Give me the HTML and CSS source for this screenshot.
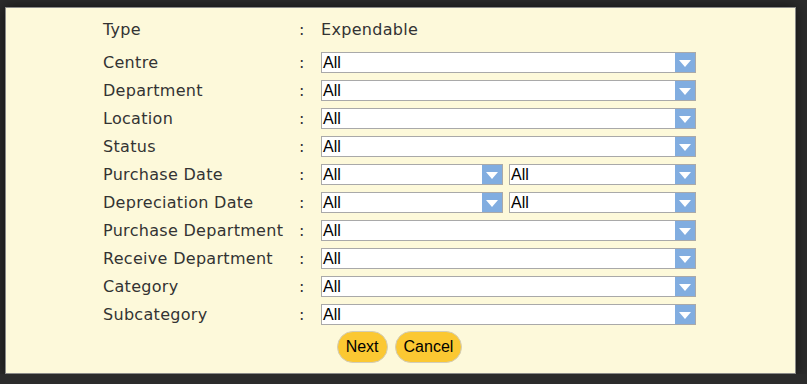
FILE: index.html
```html
<!DOCTYPE html>
<html lang="en">
<head>
  <meta charset="UTF-8">
  <title>Report Filter</title>
  <link rel="stylesheet" href="styles.css">
</head>
<body>
  <div class="panel">
    <div class="form">
      <div class="label top">Type</div><div class="colon top">:</div><div class="value top">Expendable</div>

      <div class="label">Centre</div><div class="colon">:</div>
      <div class="select"><span>All</span><i class="arrow"></i></div>

      <div class="label">Department</div><div class="colon">:</div>
      <div class="select"><span>All</span><i class="arrow"></i></div>

      <div class="label">Location</div><div class="colon">:</div>
      <div class="select"><span>All</span><i class="arrow"></i></div>

      <div class="label">Status</div><div class="colon">:</div>
      <div class="select"><span>All</span><i class="arrow"></i></div>

      <div class="label">Purchase Date</div><div class="colon">:</div>
      <div class="pair">
        <div class="select"><span>All</span><i class="arrow"></i></div>
        <div class="select"><span>All</span><i class="arrow"></i></div>
      </div>

      <div class="label">Depreciation Date</div><div class="colon">:</div>
      <div class="pair">
        <div class="select"><span>All</span><i class="arrow"></i></div>
        <div class="select"><span>All</span><i class="arrow"></i></div>
      </div>

      <div class="label">Purchase Department</div><div class="colon">:</div>
      <div class="select"><span>All</span><i class="arrow"></i></div>

      <div class="label">Receive Department</div><div class="colon">:</div>
      <div class="select"><span>All</span><i class="arrow"></i></div>

      <div class="label">Category</div><div class="colon">:</div>
      <div class="select"><span>All</span><i class="arrow"></i></div>

      <div class="label">Subcategory</div><div class="colon">:</div>
      <div class="select"><span>All</span><i class="arrow"></i></div>
    </div>

    <div class="buttons">
      <button class="btn">Next</button>
      <button class="btn">Cancel</button>
    </div>
  </div>
</body>
</html>
```

FILE: styles.css
```css
body {
  margin: 0;
  background: #2b2b2b;
  font-family: 'DejaVu Sans', Verdana, sans-serif;
}
.panel {
  width: 789px;
  height: 365px;
  margin: 7px 0 0 5px;
  background: #fdf9da;
  border: 1px solid #8a8a88;
  box-shadow: 0 0 12px rgba(0, 0, 0, 0.6);
}
.form {
  display: grid;
  grid-template-columns: 196px 22px 375px;
  row-gap: 7px;
  margin: 0 0 0 97px;
  padding-top: 11px;
  align-items: center;
}
.label, .colon, .value {
  font-size: 16px;
  letter-spacing: 0.3px;
  color: #333;
  line-height: 21px;
}
.top {
  margin-bottom: 5px;
}
.pair {
  display: flex;
  gap: 6px;
}
.pair .select {
  width: 182px;
}
.pair .select + .select {
  width: 187px;
}
.select {
  box-sizing: border-box;
  height: 21px;
  width: 375px;
  background: #fff;
  border: 1px solid #a9a9a9;
  display: flex;
  align-items: center;
  font-family: 'Liberation Sans', Arial, sans-serif;
  font-size: 16px;
  color: #000;
}
.select span {
  flex: 1;
  padding-left: 1px;
}
.arrow {
  width: 20px;
  height: 19px;
  background: #81ade0;
  position: relative;
}
.arrow::after {
  content: "";
  position: absolute;
  left: 4px;
  top: 7px;
  border-left: 6px solid transparent;
  border-right: 6px solid transparent;
  border-top: 7px solid #fff;
}
.buttons {
  display: flex;
  justify-content: center;
  gap: 7px;
  margin-top: 6px;
  padding-right: 2px;
}
.btn {
  font-family: 'Liberation Sans', Arial, sans-serif;
  font-size: 16px;
  color: #000;
  background: #fbc832;
  border: 1px solid #d2cdb8;
  border-radius: 16px;
  height: 32px;
  padding: 0 8px;
}
```
